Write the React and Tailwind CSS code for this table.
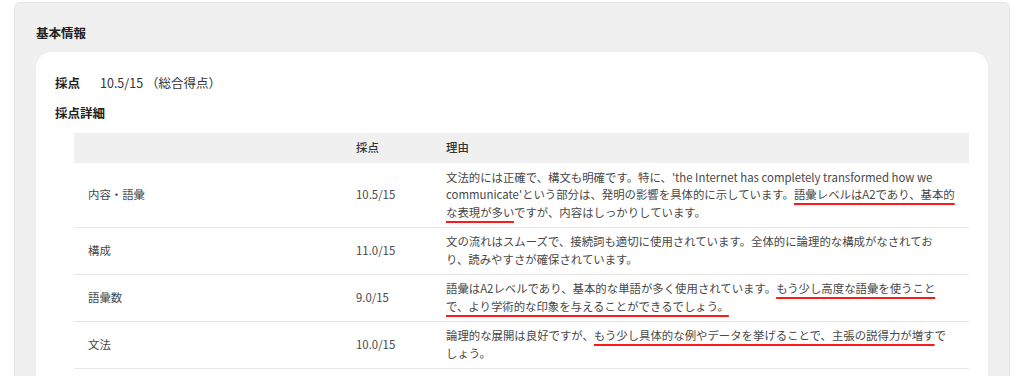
import React from 'react'

// Scoring detail card (基本情報 → 採点詳細)

const U = ({ children }) => (
  <span className="underline decoration-[#ff1a1a] decoration-2 underline-offset-[4px]">{children}</span>
)

const rows = [
  {
    item: '内容・語彙',
    score: '10.5/15',
    lines: [
      <>文法的には正確で、構文も明確です。特に、'the Internet has completely transformed how we</>,
      <>communicate'という部分は、発明の影響を具体的に示しています。<U>語彙レベルはA2であり、基本的</U></>,
      <><U>な表現が多い</U>ですが、内容はしっかりしています。</>,
    ],
  },
  {
    item: '構成',
    score: '11.0/15',
    lines: [
      <>文の流れはスムーズで、接続詞も適切に使用されています。全体的に論理的な構成がなされてお</>,
      <>り、読みやすさが確保されています。</>,
    ],
  },
  {
    item: '語彙数',
    score: '9.0/15',
    lines: [
      <>語彙はA2レベルであり、基本的な単語が多く使用されています。<U>もう少し高度な語彙を使うこと</U></>,
      <><U>で、より学術的な印象を与えることができるでしょう。</U></>,
    ],
  },
  {
    item: '文法',
    score: '10.0/15',
    lines: [
      <>論理的な展開は良好ですが、<U>もう少し具体的な例やデータを挙げることで、主張の説得力が増す</U>で</>,
      <>しょう。</>,
    ],
  },
]

export default function App() {
  return (
    <div
      className="min-h-screen bg-white pt-[2px] px-[14px] text-[#333]"
      style={{ fontFamily: '"Noto Sans CJK JP", "Noto Sans", sans-serif' }}
    >
      <div className="bg-[#f0f0f0] border border-[#e3e3e3] rounded-md px-[21px] pt-[21px] pb-6">
        <h2 className="text-[12.5px] leading-[17px] font-bold text-[#222] mb-[11px]">基本情報</h2>

        <div className="bg-white rounded-[16px] px-[19px] pt-[22px] pb-6">
          {/* 総合 */}
          <div className="flex items-center gap-[20px] text-[12.5px] leading-[17px]">
            <span className="font-bold text-[#222]">採点</span>
            <span className="text-[#333]">10.5/15 （総合得点）</span>
          </div>

          <h3 className="mt-[13px] text-[12.5px] leading-[17px] font-bold text-[#222]">採点詳細</h3>

          {/* 詳細テーブル */}
          <table className="table-fixed ml-[19px] mt-[12px] w-[895px] border-collapse text-[11.4px] leading-[17.5px] text-[#484848]">
            <colgroup>
              <col className="w-[268px]" />
              <col className="w-[90px]" />
              <col />
            </colgroup>
            <thead>
              <tr className="bg-[#f0f0f0] h-[30px]">
                <th></th>
                <th className="px-[14px] text-left font-medium text-[#333]">採点</th>
                <th className="px-[14px] text-left font-medium text-[#333]">理由</th>
              </tr>
            </thead>
            <tbody>
              {rows.map(r => (
                <tr key={r.item} className="border-b border-[#e6e6e6]">
                  <td className="px-[14px] py-[5.5px] align-middle">{r.item}</td>
                  <td className="px-[14px] py-[5.5px] align-middle">{r.score}</td>
                  <td className="px-[14px] py-[5.5px] whitespace-nowrap">
                    {r.lines.map((l, i) => (
                      <div key={i}>{l}</div>
                    ))}
                  </td>
                </tr>
              ))}
            </tbody>
          </table>
        </div>
      </div>
    </div>
  )
}
